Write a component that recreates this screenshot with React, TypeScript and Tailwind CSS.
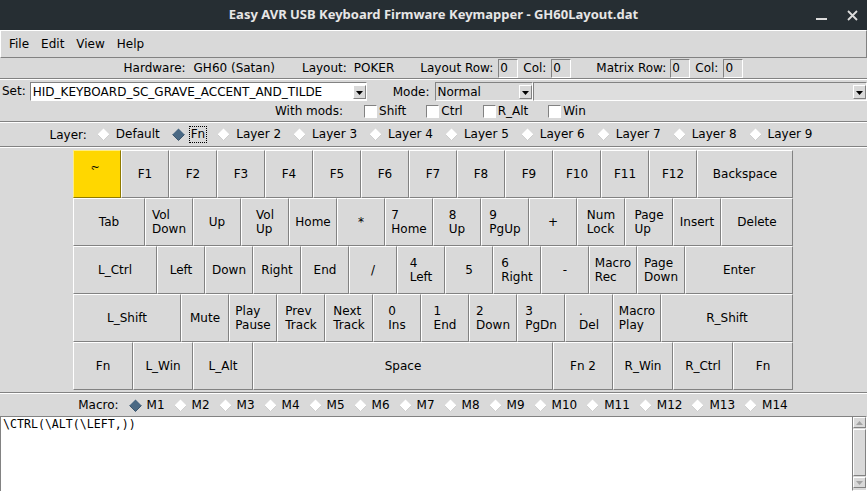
import React from "react"

const WIDTH: Record<number, string> = {
  48: "w-[48px]",
  60: "w-[60px]",
  72: "w-[72px]",
  84: "w-[84px]",
  96: "w-[96px]",
  108: "w-[108px]",
  132: "w-[132px]",
  300: "w-[300px]",
}

const rows: [string, number][][] = [
  [
    ["~", 48], ["F1", 48], ["F2", 48], ["F3", 48], ["F4", 48], ["F5", 48], ["F6", 48],
    ["F7", 48], ["F8", 48], ["F9", 48], ["F10", 48], ["F11", 48], ["F12", 48], ["Backspace", 96],
  ],
  [
    ["Tab", 72], ["Vol\nDown", 48], ["Up", 48], ["Vol\nUp", 48], ["Home", 48], ["*", 48],
    ["7\nHome", 48], ["8\nUp", 48], ["9\nPgUp", 48], ["+", 48], ["Num\nLock", 48],
    ["Page\nUp", 48], ["Insert", 48], ["Delete", 72],
  ],
  [
    ["L_Ctrl", 84], ["Left", 48], ["Down", 48], ["Right", 48], ["End", 48], ["/", 48],
    ["4\nLeft", 48], ["5", 48], ["6\nRight", 48], ["-", 48], ["Macro\nRec", 48],
    ["Page\nDown", 48], ["Enter", 108],
  ],
  [
    ["L_Shift", 108], ["Mute", 48], ["Play\nPause", 48], ["Prev\nTrack", 48], ["Next\nTrack", 48],
    ["0\nIns", 48], ["1\nEnd", 48], ["2\nDown", 48], ["3\nPgDn", 48], [".\nDel", 48],
    ["Macro\nPlay", 48], ["R_Shift", 132],
  ],
  [
    ["Fn", 60], ["L_Win", 60], ["L_Alt", 60], ["Space", 300], ["Fn 2", 60], ["R_Win", 60],
    ["R_Ctrl", 60], ["Fn", 60],
  ],
]

const layers = ["Default", "Fn", "Layer 2", "Layer 3", "Layer 4", "Layer 5", "Layer 6", "Layer 7", "Layer 8", "Layer 9"]
const macros = Array.from({ length: 14 }, (_, i) => `M${i + 1}`)

function Sep() {
  return (
    <div className="shrink-0">
      <div className="h-px bg-[#828282]" />
      <div className="h-px bg-white" />
    </div>
  )
}

function Radio({ on }: { on?: boolean }) {
  return (
    <svg width="13" height="13" viewBox="0 0 13 13" className="shrink-0">
      <polygon points="6.5,0.5 12.5,6.5 6.5,12.5 0.5,6.5" fill={on ? "#4a6984" : "#ffffff"} />
      <polyline points="12.5,6.5 6.5,12.5 0.5,6.5" fill="none" stroke={on ? "#3d566c" : "#cfcfcf"} />
    </svg>
  )
}

function Check() {
  return <div className="h-[13px] w-[13px] shrink-0 border border-t-[#828282] border-l-[#828282] border-r-white border-b-white bg-white" />
}

function Entry() {
  return (
    <div className="flex h-[19px] w-[20px] items-center border border-t-[#828282] border-l-[#828282] border-r-white border-b-white pl-px">
      0
    </div>
  )
}

function Arrow() {
  return (
    <div className="flex h-[14px] w-[13px] shrink-0 items-end justify-center border border-t-white border-l-white border-r-[#828282] border-b-[#828282] bg-[#d9d9d9] pb-[3px]">
      <svg width="7" height="4" viewBox="0 0 7 4">
        <polygon points="0,0 7,0 3.5,4" fill="#000" />
      </svg>
    </div>
  )
}

function Key({ label, w }: { label: string; w: number }) {
  const hl = label === "~"
  return (
    <div
      className={`flex h-[48px] shrink-0 items-center justify-center border ${WIDTH[w]} ${
        hl
          ? "border-t-[#ffec80] border-l-[#ffec80] border-r-[#8f7a00] border-b-[#8f7a00] bg-[#ffd700]"
          : "border-t-white border-l-white border-r-[#828282] border-b-[#828282] bg-[#d9d9d9]"
      }`}
    >
      {hl ? (
        <span className="-mt-[6px] -ml-[4px] whitespace-pre text-left text-[11px] leading-[6px]">{"~\n`"}</span>
      ) : (
        <span className="whitespace-pre text-left leading-[14px]">{label}</span>
      )}
    </div>
  )
}

export default function App() {
  return (
    <div className="flex h-[491px] w-[867px] flex-col overflow-hidden bg-[#d9d9d9] font-['DejaVu_Sans',sans-serif] text-[12px] text-black">
      {/* Title bar */}
      <div className="grid h-[30px] shrink-0 grid-cols-[1fr_auto_1fr] items-center bg-[#262e33] text-[#e6e6e6]">
        <div />
        <div className="font-['Noto_Sans',sans-serif] text-[13px] font-bold">
          Easy AVR USB Keyboard Firmware Keymapper - GH60Layout.dat
        </div>
        <div className="flex items-center justify-end gap-[20px] pr-[9px]">
          <svg width="11" height="12" viewBox="0 0 11 12">
            <rect x="0" y="9" width="11" height="2" fill="#dcdcdc" />
          </svg>
          <svg width="11" height="11" viewBox="0 0 11 11">
            <path d="M1 1L10 10M10 1L1 10" stroke="#dcdcdc" strokeWidth="1.8" />
          </svg>
        </div>
      </div>

      {/* Menu bar */}
      <div className="flex h-[28px] shrink-0 items-center gap-[12px] border border-t-white border-l-white border-r-[#828282] border-b-[#828282] pl-[8px]">
        <span>File</span>
        <span>Edit</span>
        <span>View</span>
        <span>Help</span>
      </div>

      {/* Hardware info */}
      <div className="flex h-[20px] shrink-0 items-center justify-center">
        <span>Hardware:</span>
        <span className="ml-[8px]">GH60 (Satan)</span>
        <span className="ml-[27px]">Layout:</span>
        <span className="ml-[7px]">POKER</span>
        <span className="ml-[26px]">Layout Row:</span>
        <div className="ml-[5px]"><Entry /></div>
        <span className="ml-[5px]">Col:</span>
        <div className="ml-[5px]"><Entry /></div>
        <span className="ml-[25px]">Matrix Row:</span>
        <div className="ml-[4px]"><Entry /></div>
        <span className="ml-[5px]">Col:</span>
        <div className="ml-[5px]"><Entry /></div>
      </div>
      <Sep />

      {/* Set row */}
      <div className="flex h-[21px] shrink-0 items-end pl-[2px]">
        <span className="mb-[1px] self-center pt-[2px]">Set:</span>
        <div className="ml-[4px] flex h-[19px] w-[337px] items-center border border-t-[#828282] border-l-[#828282] border-r-white border-b-white bg-white">
          <span className="flex-1 pl-[2px]">HID_KEYBOARD_SC_GRAVE_ACCENT_AND_TILDE</span>
          <Arrow />
        </div>
        <span className="ml-[26px] self-center pt-[2px]">Mode:</span>
        <div className="ml-[5px] flex h-[19px] w-[98px] items-center border border-t-[#828282] border-l-[#828282] border-r-white border-b-white bg-[#d9d9d9]">
          <span className="flex-1 pl-[2px]">Normal</span>
          <Arrow />
        </div>
        <div className="flex h-[19px] flex-1 items-center justify-end border border-t-[#828282] border-l-[#828282] border-r-white border-b-white bg-[#dedede]">
          <Arrow />
        </div>
      </div>

      {/* Modifiers */}
      <div className="flex h-[20px] shrink-0 items-center pl-[275px]">
        <span>With mods:</span>
        <div className="ml-[21px]"><Check /></div>
        <span className="ml-[2px]">Shift</span>
        <div className="ml-[20px]"><Check /></div>
        <span className="ml-[2px]">Ctrl</span>
        <div className="ml-[20px]"><Check /></div>
        <span className="ml-[2px]">R_Alt</span>
        <div className="ml-[20px]"><Check /></div>
        <span className="ml-[2px]">Win</span>
      </div>
      <Sep />

      {/* Layer selection */}
      <div className="flex h-[23px] shrink-0 items-center justify-center pr-[3px]">
        <span className="mr-[10px]">Layer:</span>
        {layers.map((l, i) => (
          <div key={l} className={`flex items-center ${i > 0 ? "ml-[10px]" : ""}`}>
            <Radio on={l === "Fn"} />
            <span
              className={`ml-[4px] border border-dotted px-px leading-[15px] ${
                l === "Fn" ? "border-black" : "border-transparent"
              }`}
            >
              {l}
            </span>
          </div>
        ))}
      </div>
      <Sep />

      {/* Keyboard */}
      <div className="flex shrink-0 py-[2px] pl-[73px]">
        <div className="flex w-[720px] flex-col">
          {rows.map((row, r) => (
            <div key={r} className="flex">
              {row.map(([label, w], k) => (
                <Key key={k} label={label} w={w} />
              ))}
            </div>
          ))}
        </div>
      </div>
      <Sep />

      {/* Macro selection */}
      <div className="flex h-[22px] shrink-0 items-center justify-center">
        <span className="mr-[10px]">Macro:</span>
        {macros.map((m, i) => (
          <div key={m} className={`flex items-center ${i > 0 ? "ml-[8px]" : ""}`}>
            <Radio on={i === 0} />
            <span className="ml-[4px] px-px">{m}</span>
          </div>
        ))}
      </div>

      {/* Macro text */}
      <div className="flex min-h-0 flex-1">
        <div className="flex-1 border-l border-t border-[#828282] bg-white pl-[2px] font-['DejaVu_Sans_Mono',monospace] text-[11.6px] leading-[15px]">
          {"\\CTRL(\\ALT(\\LEFT,))"}
        </div>
        <div className="flex w-[15px] flex-col border border-t-[#828282] border-l-[#828282] border-r-white border-b-white bg-[#d9d9d9]">
          <div className="flex h-[11px] items-center justify-center border border-t-white border-l-white border-r-[#828282] border-b-[#828282]">
            <svg width="7" height="4" viewBox="0 0 7 4">
              <polygon points="3.5,0 7,4 0,4" fill="#a3a3a3" />
            </svg>
          </div>
          <div className="my-px flex-1 border border-t-white border-l-white border-r-[#828282] border-b-[#828282]" />
          <div className="flex h-[11px] items-center justify-center border border-t-white border-l-white border-r-[#828282] border-b-[#828282]">
            <svg width="7" height="4" viewBox="0 0 7 4">
              <polygon points="0,0 7,0 3.5,4" fill="#a3a3a3" />
            </svg>
          </div>
          <div className="h-[2px]" />
        </div>
      </div>
    </div>
  )
}
